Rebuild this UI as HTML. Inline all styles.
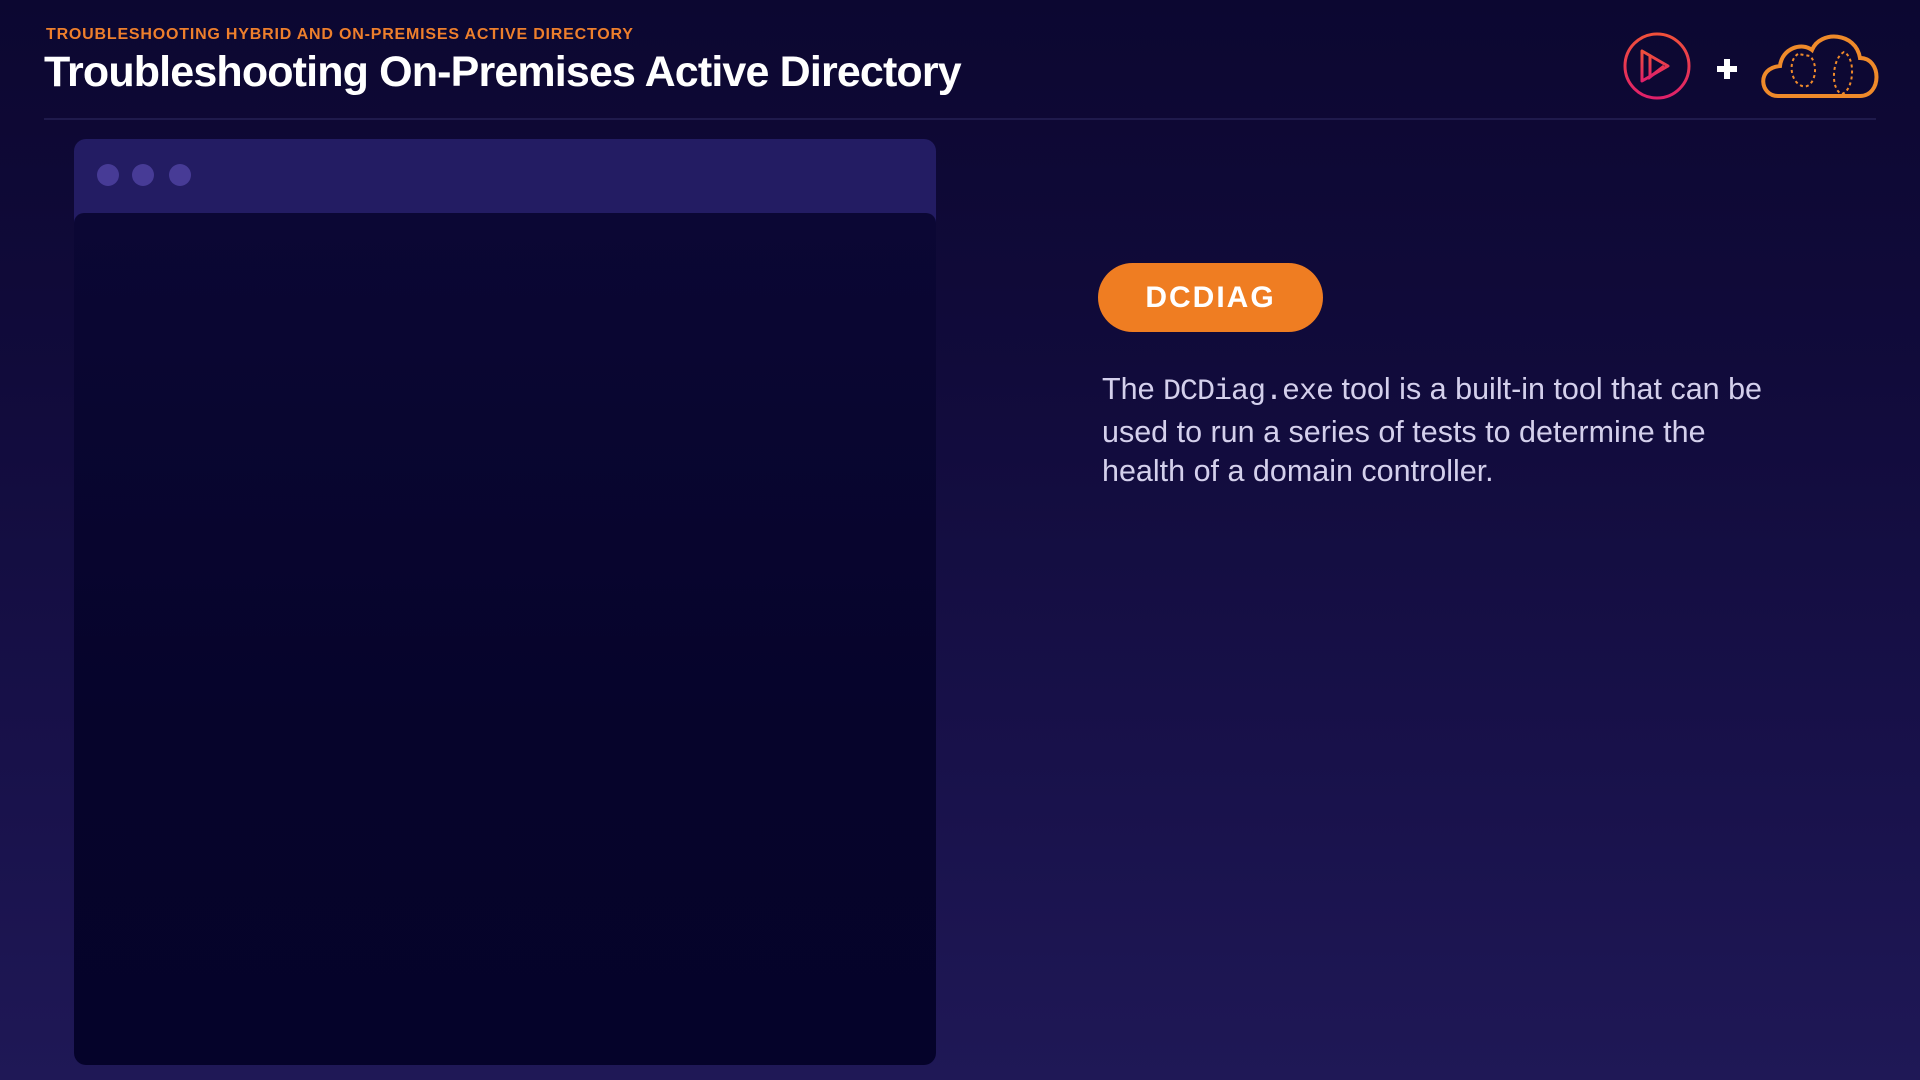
<!DOCTYPE html>
<html><head><meta charset="utf-8"><style>
html,body{margin:0;padding:0}
body{width:1920px;height:1080px;overflow:hidden;position:relative;font-family:"Liberation Sans",sans-serif;
background:linear-gradient(180deg,#0c0731 0%,#110b3b 35%,#18114a 70%,#1f1856 100%);}
.sub{position:absolute;left:46px;top:26px;font-size:16px;font-weight:bold;color:#ee7f2c;letter-spacing:0.8px}
.title{position:absolute;left:44px;top:48px;font-size:43px;font-weight:bold;color:#fff;letter-spacing:-0.85px}
.rule{position:absolute;left:44px;top:118px;width:1832px;height:2px;background:#1f1a4c}
.win{position:absolute;left:74px;top:139px;width:862px;height:926px;border-radius:12px;background:#231c63;overflow:hidden}
.win .body{position:absolute;left:0;top:74px;right:0;bottom:0;background:linear-gradient(180deg,#0b0734,#06042b 60%,#05032a);border-radius:10px 10px 8px 8px}
.dot{position:absolute;top:25px;width:22px;height:22px;border-radius:50%;background:#473b96}
.badge{position:absolute;left:1098px;top:263px;width:225px;height:69px;border-radius:35px;background:#ef7d22;color:#fff;font-weight:bold;font-size:30px;letter-spacing:2px;text-align:center;line-height:69px}
.p{position:absolute;left:1102px;top:370px;width:685px;font-size:30.5px;line-height:39.5px;color:#d4d0ec}
.p code{font-family:"Liberation Mono",monospace;font-size:30px;letter-spacing:-1px}
</style></head><body>
<div class="sub">TROUBLESHOOTING HYBRID AND ON-PREMISES ACTIVE DIRECTORY</div>
<div class="title">Troubleshooting On-Premises Active Directory</div>
<div class="rule"></div>
<svg style="position:absolute;left:1620px;top:28px" width="260" height="76" viewBox="0 0 260 76">
<defs><linearGradient id="g" x1="0" y1="0" x2="0" y2="1"><stop offset="0" stop-color="#f0503a"/><stop offset="1" stop-color="#e0206a"/></linearGradient></defs>
<circle cx="37" cy="38" r="32" fill="none" stroke="url(#g)" stroke-width="3"/>
<path d="M22 23 L22 53 L48 38 Z" fill="none" stroke="url(#g)" stroke-width="3" stroke-linejoin="round"/>
<path d="M30 27 L30 49 L44 38" fill="none" stroke="url(#g)" stroke-width="3"/>
<path d="M107 31v20M97 41h20" stroke="#fff" stroke-width="6"/>
<path d="M158 68 C140 68 136 40 160 38 C162 20 182 14 192 22 C200 2 236 4 240 30 C262 30 262 68 240 68 Z" fill="none" stroke="#ef8a2a" stroke-width="4"/>
<path d="M178 26 C168 32 170 54 182 58 C194 62 200 38 190 28 Z M224 24 C212 30 210 62 222 66 C234 62 236 30 224 24 Z" fill="none" stroke="#ef8a2a" stroke-width="2" stroke-dasharray="3 3"/>
</svg>
<div class="win"><div class="dot" style="left:23px"></div><div class="dot" style="left:58px"></div><div class="dot" style="left:95px"></div><div class="body"></div></div>
<div class="badge">DCDIAG</div>
<div class="p">The <code>DCDiag.exe</code> tool is a built-in tool that can be used to run a series of tests to determine the health of a domain controller.</div>
</body></html>
